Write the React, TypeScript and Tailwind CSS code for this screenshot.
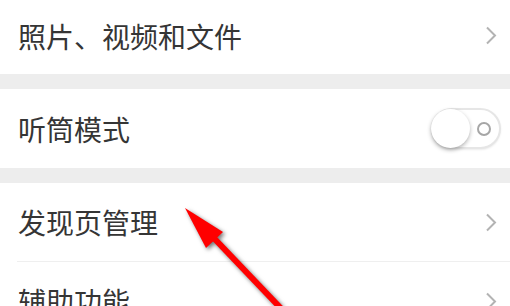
import React from "react";

const font = { fontFamily: '"Noto Sans CJK SC", "Noto Sans", sans-serif' };

function Chevron() {
  return (
    <svg width="12" height="19" viewBox="0 0 12 19" className="shrink-0">
      <path d="M2 1.5 L10 9.5 L2 17.5" fill="none" stroke="#b3b3b3" strokeWidth="2" />
    </svg>
  );
}

function Toggle() {
  return (
    <div className="flex items-center justify-between w-[70px] h-[41px] rounded-full border-2 border-[#e6e6e6] bg-white pr-[8px] shadow-[0_1px_2px_rgba(0,0,0,0.08)]">
      <div className="w-[39px] h-[39px] -ml-[2px] rounded-full bg-white shadow-[0_2px_4px_rgba(0,0,0,0.3)]" />
      <div className="w-[14px] h-[14px] rounded-full border-2 border-[#a6a6a6]" />
    </div>
  );
}

function Row({ label, h, right, divider }: { label: string; h: string; right: React.ReactNode; divider?: boolean }) {
  return (
    <div className="pl-[17px]">
      <div className={`flex items-center justify-between pl-px ${h} ${divider ? "border-b border-[#efefef]" : ""}`}>
        <span className="text-[28px] leading-none text-[#353535]">{label}</span>
        {right}
      </div>
    </div>
  );
}

export default function App() {
  return (
    <div className="relative w-[510px] h-[306px] overflow-hidden bg-white" style={font}>
      <div className="flex flex-col">
        <Row label="照片、视频和文件" h="h-[74px] pb-[3px] pr-[13px]" right={<Chevron />} />
        <div className="h-[15px] bg-[#ededed]" />
        <Row label="听筒模式" h="h-[79px] pr-[9px]" right={<Toggle />} />
        <div className="h-[15px] bg-[#ededed]" />
        <Row label="发现页管理" h="h-[79px] pr-[13px]" right={<Chevron />} divider />
        <Row label="辅助功能" h="h-[78px] pr-[13px]" right={<Chevron />} />
      </div>

      <svg
        className="absolute inset-0 pointer-events-none"
        width="510"
        height="306"
        viewBox="0 0 510 306"
        style={{ filter: "drop-shadow(2px 2px 2px rgba(0,0,0,0.55))" }}
      >
        <line x1="210" y1="234" x2="292" y2="320" stroke="#ff0000" strokeWidth="6" />
        <polygon points="185,208 223,232 206,248" fill="#ff0000" />
      </svg>
    </div>
  );
}
